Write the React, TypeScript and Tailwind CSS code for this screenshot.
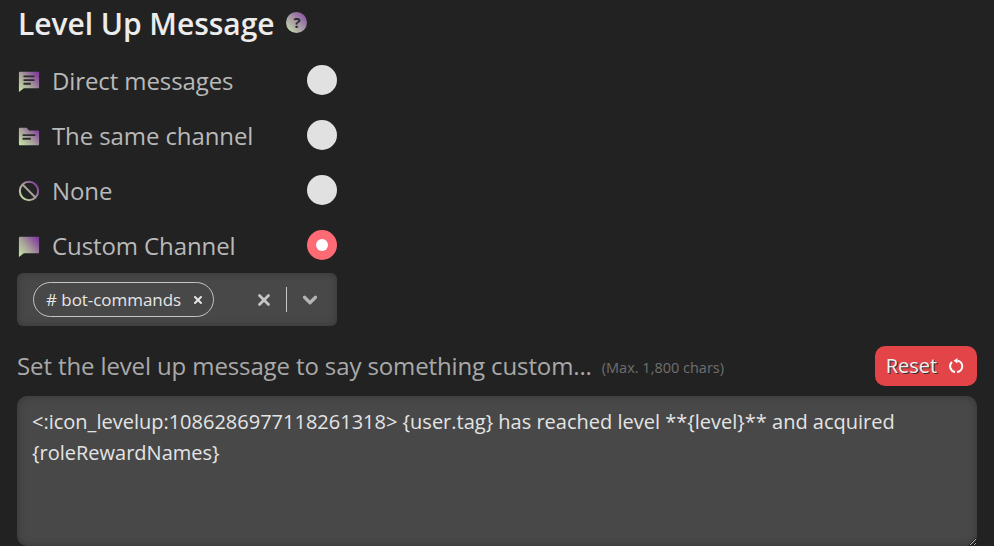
import { useId } from "react";
import { X, ChevronDown } from "lucide-react";

const font = "font-['Open_Sans',sans-serif]";

function GradientIcon({ size = 22, children }: { size?: number; children: (fill: string) => React.ReactNode }) {
  const id = useId().replace(/:/g, "");
  return (
    <svg width={size} height={size} viewBox="0 0 24 24" className="shrink-0">
      <defs>
        <linearGradient id={id} x1="0" y1="1" x2="1" y2="0.2">
          <stop offset="0" stopColor="#c6e8a6" />
          <stop offset="0.5" stopColor="#a8a09a" />
          <stop offset="1" stopColor="#84409c" />
        </linearGradient>
      </defs>
      {children(`url(#${id})`)}
    </svg>
  );
}

function MessageIcon() {
  return (
    <GradientIcon>
      {(fill) => (
        <>
          <path d="M2 2h20a1 1 0 0 1 1 1v16a1 1 0 0 1-1 1H6.5L1 24V3a1 1 0 0 1 1-1z" fill={fill} />
          <path d="M6 6h12v2H6zM6 10h12v2H6zM6 14h8v2H6z" fill="#2b2b2b" />
        </>
      )}
    </GradientIcon>
  );
}

function FolderIcon() {
  return (
    <GradientIcon>
      {(fill) => (
        <>
          <path d="M2 3h7.5l2.5 3h10a1 1 0 0 1 1 1v14a1 1 0 0 1-1 1H2a1 1 0 0 1-1-1V4a1 1 0 0 1 1-1z" fill={fill} />
          <path d="M5 10h14v2H5zM5 14h9v2H5z" fill="#2b2b2b" />
        </>
      )}
    </GradientIcon>
  );
}

function BlockIcon() {
  return (
    <GradientIcon>
      {(fill) => (
        <>
          <circle cx="12" cy="12" r="10" fill="none" stroke={fill} strokeWidth="2.2" />
          <path d="M5 5l14 14" fill="none" stroke="#a8a09a" strokeWidth="2.2" />
        </>
      )}
    </GradientIcon>
  );
}

function ChatIcon() {
  return (
    <GradientIcon>
      {(fill) => <path d="M2 2h20a1 1 0 0 1 1 1v16a1 1 0 0 1-1 1H6.5L1 24V3a1 1 0 0 1 1-1z" fill={fill} />}
    </GradientIcon>
  );
}

function ResetIcon() {
  return (
    <svg width="16" height="16" viewBox="0 0 16 16" className="shrink-0">
      <path d="M9.5 2.7A5.7 5.7 0 0 1 9 14" fill="none" stroke="white" strokeWidth="2" />
      <path d="M4 4A5.7 5.7 0 0 0 7 13.9" fill="none" stroke="white" strokeWidth="2" />
      <path d="M9.5 0L5.5 2.8L9.5 5.5z" fill="white" />
    </svg>
  );
}

function Option({ icon, label, active }: { icon: React.ReactNode; label: string; active?: boolean }) {
  return (
    <div className="flex h-[55px] items-center">
      <div className="flex w-[34px] items-center">{icon}</div>
      <span className="flex-1 text-[24px] tracking-[-0.1px] text-[#b9b9b9]">{label}</span>
      {active ? (
        <span className="-mt-[2px] flex h-[30px] w-[30px] items-center justify-center rounded-full bg-[#ff6b74]">
          <span className="h-3 w-3 rounded-full bg-white" />
        </span>
      ) : (
        <span className="-mt-[2px] h-[30px] w-[30px] rounded-full bg-[#e1e1e1]" />
      )}
    </div>
  );
}

export default function App() {
  return (
    <div className={`${font} h-[546px] w-[994px] overflow-hidden bg-[#222222]`}>
      <div className="pl-[18px] pr-[17px]">
        <div className="flex h-[47px] items-center gap-[12px]">
          <h1 className="text-[30px] font-semibold tracking-[-0.05px] text-[#ececec]">Level Up Message</h1>
          <span className="-mt-[3px] flex h-[21px] w-[21px] items-center justify-center rounded-full bg-gradient-to-tr from-[#c6e8a6] to-[#84409c] text-[15px] font-bold text-[#2b2b2b]">
            ?
          </span>
        </div>

        <div className="mt-[6px] w-[319px]">
          <Option icon={<MessageIcon />} label="Direct messages" />
          <Option icon={<FolderIcon />} label="The same channel" />
          <Option icon={<BlockIcon />} label="None" />
          <Option icon={<ChatIcon />} label="Custom Channel" active />
        </div>

        <div className="-ml-px flex h-[53px] w-[320px] items-center rounded-md bg-[#484848] pl-4 pr-4 shadow-[inset_0_0_8px_rgba(0,0,0,0.25)]">
          <div className="flex h-[35px] w-[181px] items-center justify-between rounded-full border border-[#c4c4c4] pl-3 pr-[9px] text-[17px] text-[#e6e6e6]">
            <span className="tracking-[-0.05px]"># bot-commands</span>
            <X size={12} strokeWidth={4} />
          </div>
          <div className="ml-auto flex items-center">
            <X size={18} strokeWidth={3.5} className="-mr-px text-[#c8c8c8]" />
            <span className="ml-[14px] h-[25px] w-px bg-[#c8c8c8]" />
            <ChevronDown size={22} strokeWidth={3.5} className="ml-[12px] text-[#b4b4b4]" />
          </div>
        </div>

        <div className="mt-[20px] flex h-[40px] items-center">
          <span className="-ml-px text-[24px] tracking-[-0.12px] text-[#a9a9a9]">Set the level up message to say something custom...</span>
          <span className="ml-[10px] mt-1 text-[14.5px] text-[#6f6f6f]">(Max. 1,800 chars)</span>
          <button className="ml-auto flex h-[40px] w-[102px] items-center justify-center gap-[11px] rounded-[10px] bg-[#e24447] pr-[2px] text-[20px] text-[#f0f0f0] [text-shadow:1px_1px_0_#333]">
            Reset
            <ResetIcon />
          </button>
        </div>

        <textarea
          readOnly
          className="-ml-px mt-[10px] block h-[150px] w-[960px] rounded-[10px] bg-[#484848] px-[15px] py-[10px] text-[20px] leading-[31px] text-[#e4e4e4] shadow-[inset_0_0_8px_rgba(0,0,0,0.25)] outline-none"
          defaultValue="<:icon_levelup:1086286977118261318> {user.tag} has reached level **{level}** and acquired {roleRewardNames}"
        />
      </div>
    </div>
  );
}
